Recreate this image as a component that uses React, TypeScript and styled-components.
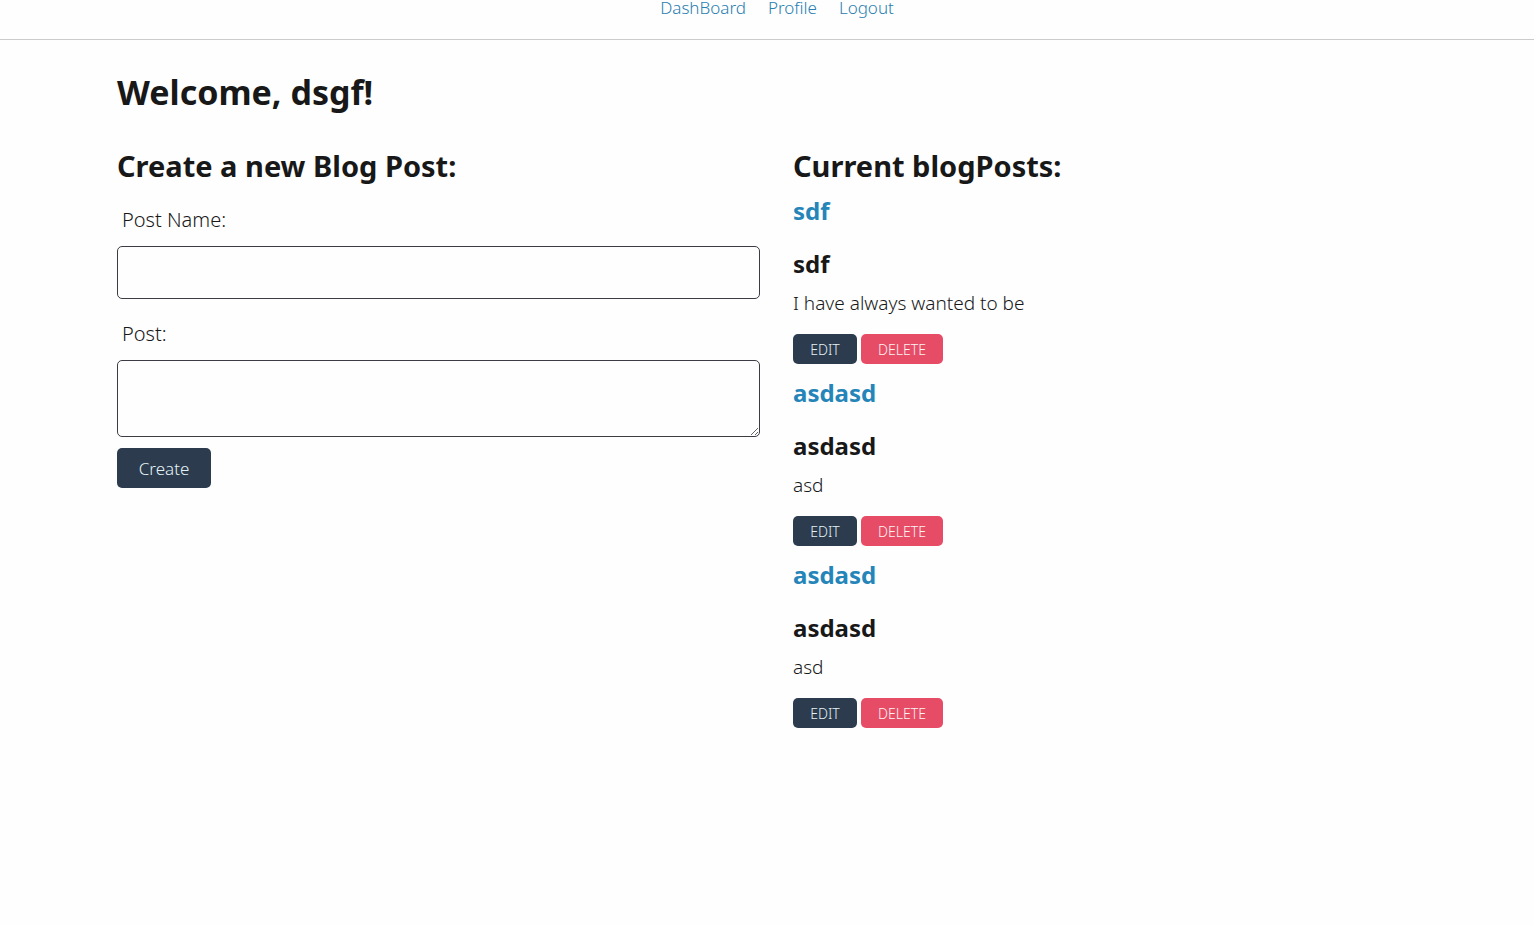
import React from 'react';
import styled, { createGlobalStyle } from 'styled-components';

const GlobalStyle = createGlobalStyle`
  *, *::before, *::after { box-sizing: border-box; }
  body {
    margin: 0;
    background: #fefefe;
    color: #181818;
    font-family: 'Segoe UI', 'Noto Sans', 'Open Sans', sans-serif;
    font-weight: 350;
  }
  h1, h2, h3, p { margin: 0; }
`;

const Header = styled.header`
  height: 40px;
  border-bottom: 1px solid #cbcbcb;
  padding-left: 20px;
`;

const Nav = styled.nav`
  display: flex;
  justify-content: center;
  gap: 22px;
`;

const NavLink = styled.a`
  color: #2980b0;
  font-size: 17px;
  line-height: 16px;
  text-decoration: none;
`;

const Main = styled.main`
  padding: 30px 98px 40px 117px;
`;

const Title = styled.h1`
  font-size: 34px;
  line-height: 44px;
`;

const Columns = styled.div`
  display: grid;
  grid-template-columns: 1fr 1fr;
  align-items: start;
  gap: 33px;
  margin-top: 32px;
`;

const SectionTitle = styled.h2`
  font-size: 29px;
  line-height: 40px;
`;

const Form = styled.form`
  display: grid;
  gap: 21px;
  margin: 20px 0 11px;
`;

const Field = styled.div`
  display: grid;
  gap: 12px;
`;

const Label = styled.label`
  padding: 0 5px;
  font-size: 20px;
  line-height: 28px;
`;

const fieldStyle = `
  display: block;
  width: 100%;
  padding: 12px;
  border: 1px solid #3c3c44;
  border-radius: 5px;
  background: #fefefe;
  color: inherit;
  font: inherit;
  font-size: 19px;
`;

const TextInput = styled.input`
  ${fieldStyle}
  height: 53px;
`;

const TextArea = styled.textarea`
  ${fieldStyle}
  height: 77px;
  resize: both;
`;

const Button = styled.button<{ $tone?: 'dark' | 'danger'; $large?: boolean }>`
  height: ${(p) => (p.$large ? 40 : 30)}px;
  min-width: ${(p) => (p.$large ? 94 : p.$tone === 'danger' ? 82 : 64)}px;
  padding: 0 16px;
  border: 0;
  border-radius: 5px;
  background: ${(p) => (p.$tone === 'danger' ? '#e74c66' : '#2c3c4e')};
  color: ${(p) => (p.$tone === 'danger' ? '#fdf3f4' : '#e4f1f6')};
  font-family: inherit;
  font-size: ${(p) => (p.$large ? 17 : 14)}px;
  font-weight: inherit;
  cursor: pointer;
`;

const Posts = styled.div`
  display: grid;
  gap: 13px;
  margin-top: 9px;
`;

const PostHeading = styled.h3`
  font-size: 24px;
  line-height: 32px;

  & + & { margin-top: 21px; }
`;

const PostLink = styled.a`
  color: #2585b9;
  text-decoration: none;
`;

const PostText = styled.p`
  margin-top: 9px;
  font-size: 19px;
  font-weight: 300;
  line-height: 28px;
`;

const Actions = styled.div`
  display: flex;
  gap: 4px;
  margin-top: 17px;
`;

const posts = [
  { id: 1, name: 'sdf', text: 'I have always wanted to be' },
  { id: 2, name: 'asdasd', text: 'asd' },
  { id: 3, name: 'asdasd', text: 'asd' },
];

export default function App() {
  return (
    <>
      <GlobalStyle />
      <Header>
        <Nav>
          <NavLink href="#dashboard">DashBoard</NavLink>
          <NavLink href="#profile">Profile</NavLink>
          <NavLink href="#logout">Logout</NavLink>
        </Nav>
      </Header>
      <Main>
        <Title>Welcome, dsgf!</Title>
        <Columns>
          <section>
            <SectionTitle>Create a new Blog Post:</SectionTitle>
            <Form id="create-post" onSubmit={(e) => e.preventDefault()}>
              <Field>
                <Label htmlFor="post-name">Post Name:</Label>
                <TextInput id="post-name" type="text" />
              </Field>
              <Field>
                <Label htmlFor="post-body">Post:</Label>
                <TextArea id="post-body" />
              </Field>
            </Form>
            <Button type="submit" form="create-post" $large>Create</Button>
          </section>
          <section>
            <SectionTitle>Current blogPosts:</SectionTitle>
            <Posts>
              {posts.map((post) => (
                <article key={post.id}>
                  <PostHeading>
                    <PostLink href={`#post-${post.id}`}>{post.name}</PostLink>
                  </PostHeading>
                  <PostHeading>{post.name}</PostHeading>
                  <PostText>{post.text}</PostText>
                  <Actions>
                    <Button type="button">EDIT</Button>
                    <Button type="button" $tone="danger">DELETE</Button>
                  </Actions>
                </article>
              ))}
            </Posts>
          </section>
        </Columns>
      </Main>
    </>
  );
}
